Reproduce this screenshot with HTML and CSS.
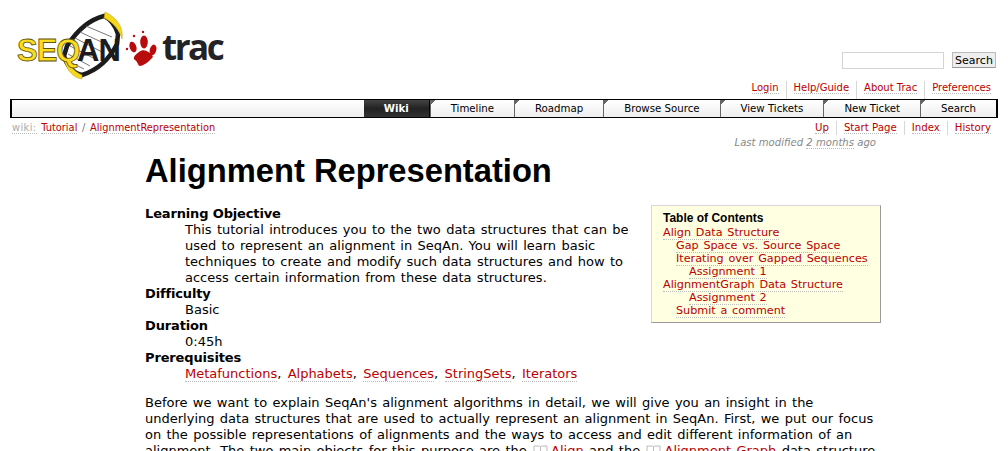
FILE: index.html
```html
<!DOCTYPE html>
<html>

<head>
    <title>Tutorial/AlignmentRepresentation - SeqAn</title>
    <link rel="stylesheet" href="styles.css">
</head>

<body>
    <!-- Logo and search box -->
    <div class="banner">
        <a class="logo" href="#">
            <svg width="230" height="84" viewBox="0 0 230 84">
                <path d="M104 16 C88 20 76 32 67 46 L64 56 C67 66 74 74 82 75 C98 70 110 58 117 44 L118 34 C115 24 110 19 104 16Z" fill="#fff" stroke="#1c1c1c" stroke-width="4.500"/>
                <path d="M86 26 L112 37 M80 32 L110 46 M75 38 L104 53 M70 46 L97 60 M68 54 L90 66 M72 63 L84 69" stroke="#777" stroke-width="1" fill="none"/>
                <path d="M105 12 C116 17 124 27 122 39 C120 31 113 22 104 18Z" fill="#f5d81c" stroke="#b9a000" stroke-width=".5"/>
                <path d="M64 60 C67 70 73 78 82 79 L82 75 C75 72 70 67 68 58Z" fill="#f5d81c" stroke="#b9a000" stroke-width=".5"/>
                <text class="logo-seq" x="17" y="61">SEQ</text>
                <text class="logo-an" x="77" y="61">AN</text>
                <g fill="#b80b0b">
                    <path d="M139 52 C144 48 150 52 153 57 C150 60 146 65 140 66 C138 66 138 62 135 60 C132 58 135 55 139 52Z"/>
                    <ellipse cx="133" cy="47" rx="3.300" ry="5.500" transform="rotate(-20 133 47)"/>
                    <ellipse cx="144" cy="42" rx="3.800" ry="6.500"/>
                    <ellipse cx="153" cy="50" rx="3.300" ry="5.500" transform="rotate(15 153 50)"/>
                    <circle cx="127" cy="49" r="1.200"/>
                    <circle cx="134" cy="36" r="1.200"/>
                    <circle cx="143" cy="32" r="1.200"/>
                </g>
                <text class="logo-trac" x="162" y="60">trac</text>
            </svg>
        </a>
        <form class="search-form">
            <input class="search-input" type="text">
            <input class="search-button" type="submit" value="Search">
        </form>
    </div>

    <!-- Meta links -->
    <ul class="links metanav">
        <li><a href="#">Login</a></li>
        <li><a href="#">Help/Guide</a></li>
        <li><a href="#">About Trac</a></li>
        <li><a href="#">Preferences</a></li>
    </ul>

    <!-- Main navigation -->
    <ul class="mainnav">
        <li class="active">Wiki</li>
        <li>Timeline</li>
        <li>Roadmap</li>
        <li>Browse Source</li>
        <li>View Tickets</li>
        <li>New Ticket</li>
        <li>Search</li>
    </ul>

    <div class="context">
        <p class="path">
            <span class="path-label">wiki:</span>
            <a href="#">Tutorial</a> / <a href="#">AlignmentRepresentation</a>
        </p>
        <ul class="links ctxtnav">
            <li><a href="#">Up</a></li>
            <li><a href="#">Start Page</a></li>
            <li><a href="#">Index</a></li>
            <li><a href="#">History</a></li>
        </ul>
    </div>
    <p class="last-modified">Last modified <span class="dotted">2 months</span> ago</p>

    <!-- Wiki page -->
    <div class="content">
        <h1>Alignment Representation</h1>

        <div class="toc">
            <h4>Table of Contents</h4>
            <ol>
                <li><a href="#">Align Data Structure</a>
                    <ol>
                        <li><a href="#">Gap Space vs. Source Space</a></li>
                        <li><a href="#">Iterating over Gapped Sequences</a>
                            <ol>
                                <li><a href="#">Assignment 1</a></li>
                            </ol>
                        </li>
                    </ol>
                </li>
                <li><a href="#">AlignmentGraph Data Structure</a>
                    <ol>
                        <li>
                            <ol>
                                <li><a href="#">Assignment 2</a></li>
                            </ol>
                        </li>
                        <li><a href="#">Submit a comment</a></li>
                    </ol>
                </li>
            </ol>
        </div>

        <dl class="facts">
            <dt>Learning Objective</dt>
            <dd>This tutorial introduces you to the two data structures that can be used to represent an alignment in SeqAn. You will learn basic techniques to create and modify such data structures and how to access certain information from these data structures.</dd>
            <dt>Difficulty</dt>
            <dd>Basic</dd>
            <dt>Duration</dt>
            <dd>0:45h</dd>
            <dt>Prerequisites</dt>
            <dd class="prereq"><a href="#">Metafunctions</a>, <a href="#">Alphabets</a>, <a href="#">Sequences</a>, <a href="#">StringSets</a>, <a href="#">Iterators</a></dd>
        </dl>

        <p class="intro">Before we want to explain SeqAn's alignment algorithms in detail, we will give you an insight in the underlying data structures that are used to actually represent an alignment in SeqAn. First, we put our focus on the possible representations of alignments and the ways to access and edit different information of an alignment. The two main objects for this purpose are the
            <svg class="book" width="15" height="11" viewBox="0 0 15 11"><path d="M1 1h5.500l1 1 1-1H14v9H8.500l-1 .500-1-.500H1zM7.500 2v8" fill="none" stroke="#bbb"/></svg><a class="plain" href="#">Align</a> and the
            <svg class="book" width="15" height="11" viewBox="0 0 15 11"><path d="M1 1h5.500l1 1 1-1H14v9H8.500l-1 .500-1-.500H1zM7.500 2v8" fill="none" stroke="#bbb"/></svg><a class="plain" href="#">Alignment Graph</a> data structure</p>
    </div>
</body>

</html>
```

FILE: styles.css
```css
html,
body {
    height: 451px;
    overflow: hidden;
}

body {
    margin: 0;
    padding: 0 10px;
    background: #fff;
    color: #000;
    font-family: "DejaVu Sans", Verdana, sans-serif;
    font-size: 13px;
    line-height: 16px;
}

a {
    color: #b00;
    text-decoration: none;
    border-bottom: 1px dotted #bbb;
}

a.plain {
    border-bottom: none;
}

ul {
    list-style: none;
    margin: 0;
    padding: 0;
}

/* Top banner */
.banner {
    display: flex;
    justify-content: space-between;
    height: 81px;
}

/* The logo image starts at the window edge, not at the body padding */
.logo {
    border: none;
    display: block;
    height: 84px;
    margin-left: -10px;
}

.logo-seq,
.logo-an {
    font-family: "Liberation Sans", sans-serif;
    font-size: 31px;
    font-weight: bold;
    letter-spacing: -1px;
}

.logo-seq {
    fill: #fbdc1e;
    stroke: #5c5410;
    stroke-width: .8px;
}

.logo-an {
    fill: #1c1c1c;
}

.logo-trac {
    font-family: "Open Sans", sans-serif;
    font-size: 35px;
    font-weight: bold;
    fill: #232326;
    letter-spacing: -2.500px;
}

.search-form {
    display: flex;
    align-items: center;
    gap: 8px;
    height: 18px;
    margin: 51px 2px 0 0;
}

.search-input {
    box-sizing: border-box;
    width: 102px;
    height: 17px;
    margin: 0;
    border: 1px solid #d4d4d4;
    background: #fff;
}

.search-button {
    box-sizing: border-box;
    width: 44px;
    height: 16px;
    margin: 0;
    padding: 0;
    border: 1px solid #bbb;
    border-bottom-color: #999;
    background: #eee;
    font-family: "DejaVu Sans", Verdana, sans-serif;
    font-size: 11px;
    color: #000;
}

/* Link lists with thin separators */
.links {
    display: flex;
    justify-content: flex-end;
    font-size: 10.200px;
    line-height: 13px;
}

.links li {
    padding: 0 7px;
    border-left: 1px solid #d7d7d7;
}

.links li:first-child {
    border-left: none;
}

.metanav {
    height: 18px;
    font-size: 10px;
}

/* Main navigation */
.mainnav {
    display: flex;
    justify-content: flex-end;
    box-sizing: border-box;
    height: 19px;
    border: 2px solid #000;
    border-width: 1px 2px 1px 2px;
    background: linear-gradient(#fff, #f7f7f7 50%, #eee);
    font-size: 10.200px;
    line-height: 17px;
}

.mainnav li {
    padding: 0 20px;
    border-left: 1px solid #666;
    background: linear-gradient(135deg, #666 3px, transparent 3px) no-repeat 0 0 / 5px 5px;
}

.mainnav .active {
    padding: 0 20px;
    border-left: none;
    border-right: 1px solid #000;
    background: linear-gradient(#444, #222 50%, #333);
    color: #fff;
    font-weight: bold;
}

/* Path and context links */
.context {
    display: flex;
    justify-content: space-between;
    height: 17px;
    padding-top: 3px;
    box-sizing: border-box;
    font-size: 10px;
    line-height: 13px;
}

.path {
    margin: 0 0 0 2px;
    color: #777;
    font-size: 9.850px;
    word-spacing: 1.500px;
}

.path-label {
    color: #aaa;
    border-bottom: 1px dotted #bbb;
    letter-spacing: .4px;
}

.last-modified {
    margin: 0 122px 0 0;
    height: 20px;
    text-align: right;
    color: #888;
    font-size: 10.100px;
    font-style: italic;
    line-height: 15px;
}

.dotted {
    border-bottom: 1px dotted #bbb;
}

/* Wiki content */
.content {
    margin: -3px 117px 0 135px;
    word-spacing: 1.200px;
}

h1 {
    margin: 0 0 17px;
    font-family: "Liberation Sans", Arial, sans-serif;
    font-size: 32.700px;
    line-height: 37px;
    font-weight: bold;
    word-spacing: 0;
}

.toc {
    float: right;
    box-sizing: border-box;
    width: 230px;
    height: 118px;
    margin: -1px 0 0 20px;
    padding: 6px 8px 5px 11px;
    background: #ffffe1;
    border: 1px solid #d7d7d7;
    border-right-color: #999;
    border-bottom-color: #999;
    font-size: 11.200px;
    line-height: 13px;
    word-spacing: 1.200px;
}

.toc h4 {
    margin: 0 0 1px;
    font-family: "Liberation Sans", Arial, sans-serif;
    font-size: 12px;
    word-spacing: 0;
}

.toc ol {
    list-style: none;
    margin: 0;
    padding: 0;
}

.toc ol ol {
    padding-left: 13px;
}

.facts {
    margin: 0 0 13px;
}

dt {
    font-weight: bold;
    letter-spacing: -.15px;
    word-spacing: 0;
}

dd {
    margin: 0 0 0 40px;
}

/* Commas and spaces run wider in this list */
.prereq {
    word-spacing: 2.200px;
}

.intro {
    margin: 0;
}

.book {
    margin: 0 3px 0 1px;
    vertical-align: -1px;
}
```
